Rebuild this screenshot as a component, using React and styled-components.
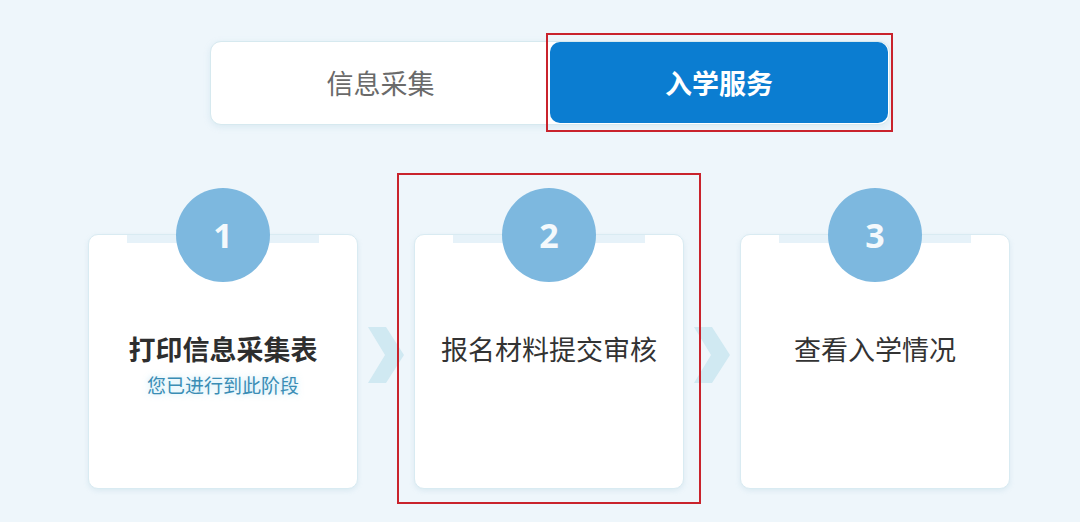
import React from "react";
import styled, { createGlobalStyle } from "styled-components";

const Global = createGlobalStyle`
  html, body { margin: 0; padding: 0; }
  body {
    background: #eef6fb;
    font-family: "Noto Sans CJK SC", "Noto Sans", sans-serif;
  }
`;

const Page = styled.div`
  width: 1080px;
  height: 522px;
  box-sizing: border-box;
  padding-top: 41px;
  display: flex;
  flex-direction: column;
  align-items: flex-start;
  background: #eef6fb;
  overflow: hidden;
`;

const TabBar = styled.div`
  margin-left: 210px;
  width: 680px;
  height: 84px;
  box-sizing: border-box;
  display: flex;
  padding: 0 1px 1px 0;
  background: #ffffff;
  border: 1px solid #d6e9ef;
  border-radius: 11px;
  box-shadow: 0 2px 6px rgba(160, 200, 220, 0.25);
`;

const Tab = styled.div`
  position: relative;
  flex: ${(p) => (p.$active ? "0 0 338px" : "1")};
  display: flex;
  align-items: center;
  justify-content: center;
  font-size: 27px;
  border-radius: 10px;
  background: ${(p) => (p.$active ? "#0b7dd1" : "transparent")};
  color: ${(p) => (p.$active ? "#ffffff" : "#6a6a6a")};
  font-weight: ${(p) => (p.$active ? 700 : 400)};

  ${(p) =>
    p.$marked &&
    `
    &::after {
      content: "";
      position: absolute;
      left: -4px;
      right: -5px;
      top: -9px;
      bottom: -9px;
      border: 2px solid #c9232c;
      pointer-events: none;
    }
  `}
`;

const Steps = styled.div`
  margin-left: 88px;
  margin-top: 109px;
  display: flex;
  align-items: flex-start;
`;

const Card = styled.div`
  position: relative;
  width: 270px;
  height: 255px;
  box-sizing: border-box;
  background: #ffffff;
  border: 1px solid #d9ebf2;
  border-radius: 10px;
  box-shadow: 0 2px 5px rgba(150, 190, 210, 0.22);
  display: flex;
  flex-direction: column;
  align-items: center;
  padding-top: 95px;

  &::before {
    content: "";
    position: absolute;
    top: 0;
    left: 38px;
    right: 38px;
    height: 8px;
    background: #e6f2f9;
  }

  ${(p) =>
    p.$marked &&
    `
    &::after {
      content: "";
      position: absolute;
      left: -18px;
      right: -18px;
      top: -62px;
      bottom: -16px;
      border: 2px solid #c9232c;
      pointer-events: none;
    }
  `}
`;

const Badge = styled.div`
  position: absolute;
  top: -47px;
  left: 50%;
  transform: translateX(-50%);
  width: 94px;
  height: 94px;
  border-radius: 50%;
  background: #7db8df;
  color: #f4f9fc;
  display: flex;
  align-items: center;
  justify-content: center;
  font-family: "Noto Sans", "Open Sans", sans-serif;
  font-weight: 700;
  font-size: 34px;
  z-index: 1;
`;

const Title = styled.div`
  font-size: 27px;
  line-height: 38px;
  color: ${(p) => (p.$strong ? "#2e2e2e" : "#333333")};
  font-weight: ${(p) => (p.$strong ? 700 : 400)};
`;

const Sub = styled.div`
  margin-top: 4px;
  font-size: 19px;
  line-height: 26px;
  color: #3a8db5;
  text-shadow: 0 0 6px rgba(150, 215, 240, 0.7);
`;

const Arrow = styled.div`
  width: 56px;
  height: 255px;
  display: flex;
  align-items: center;
  justify-content: center;
  padding-bottom: 13px;
  box-sizing: border-box;
`;

function Chevron() {
  return (
    <svg width="36" height="56" viewBox="0 0 36 56">
      <polygon points="0,0 18,0 36,28 18,56 0,56 17,28" fill="#d0e9f2" />
    </svg>
  );
}

const steps = [
  { n: 1, title: "打印信息采集表", strong: true, sub: "您已进行到此阶段" },
  { n: 2, title: "报名材料提交审核", marked: true },
  { n: 3, title: "查看入学情况" },
];

export default function App() {
  return (
    <>
      <Global />
      <Page>
        <TabBar>
          <Tab>信息采集</Tab>
          <Tab $active $marked>
            入学服务
          </Tab>
        </TabBar>
        <Steps>
          {steps.map((s, i) => (
            <React.Fragment key={s.n}>
              {i > 0 && (
                <Arrow>
                  <Chevron />
                </Arrow>
              )}
              <Card $marked={s.marked}>
                <Badge>{s.n}</Badge>
                <Title $strong={s.strong}>{s.title}</Title>
                {s.sub && <Sub>{s.sub}</Sub>}
              </Card>
            </React.Fragment>
          ))}
        </Steps>
      </Page>
    </>
  );
}
